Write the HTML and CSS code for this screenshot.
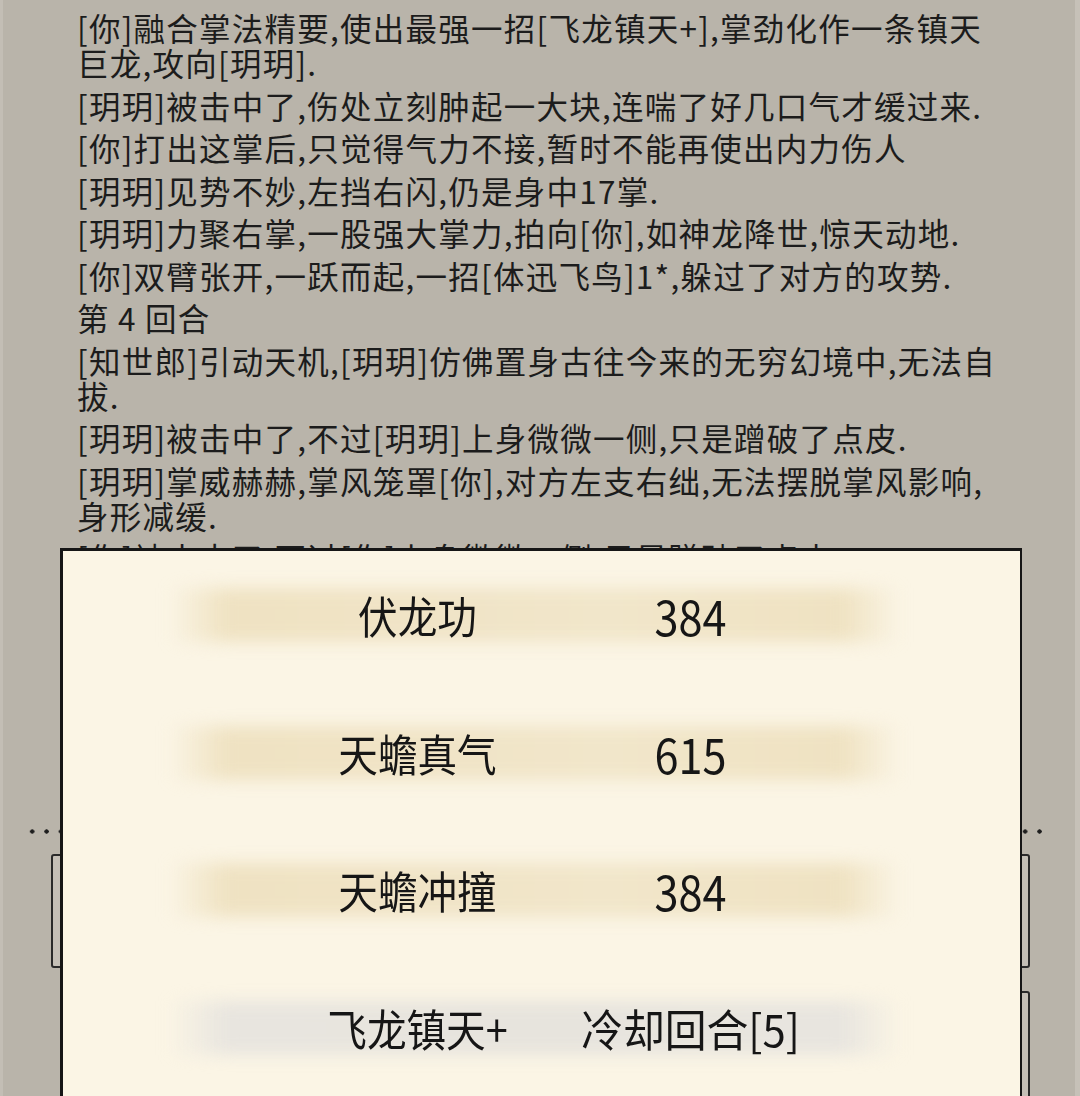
FILE: index.html
```html
<!DOCTYPE html>
<html lang="zh-CN">
<head>
<meta charset="utf-8">
<title>战斗</title>
<link rel="stylesheet" href="styles.css">
</head>
<body>
<div class="screen">
  <div class="log">
    <p>[你]融合掌法精要,使出最强一招[飞龙镇天+],掌劲化作一条镇天巨龙,攻向[玥玥].</p>
    <p>[玥玥]被击中了,伤处立刻肿起一大块,连喘了好几口气才缓过来.</p>
    <p>[你]打出这掌后,只觉得气力不接,暂时不能再使出内力伤人</p>
    <p>[玥玥]见势不妙,左挡右闪,仍是身中17掌.</p>
    <p>[玥玥]力聚右掌,一股强大掌力,拍向[你],如神龙降世,惊天动地.</p>
    <p>[你]双臂张开,一跃而起,一招[体迅飞鸟]1*,躲过了对方的攻势.</p>
    <p>第 4 回合</p>
    <p>[知世郎]引动天机,[玥玥]仿佛置身古往今来的无穷幻境中,无法自拔.</p>
    <p>[玥玥]被击中了,不过[玥玥]上身微微一侧,只是蹭破了点皮.</p>
    <p>[玥玥]掌威赫赫,掌风笼罩[你],对方左支右绌,无法摆脱掌风影响,身形减缓.</p>
    <p>[你]被击中了,不过[你]上身微微一侧,只是蹭破了点皮.</p>
  </div>
  <div class="divider"></div>
  <div class="actions">
    <div class="btn btn-left"></div>
    <div class="btn btn-right"></div>
    <div class="slot"></div>
    <div class="btn btn-right"></div>
  </div>

  <div class="popup">
    <div class="skill">
      <span class="name">伏龙功</span>
      <span class="value num">384</span>
    </div>
    <div class="skill">
      <span class="name">天蟾真气</span>
      <span class="value num">615</span>
    </div>
    <div class="skill">
      <span class="name">天蟾冲撞</span>
      <span class="value num">384</span>
    </div>
    <div class="skill skill-cd">
      <span class="name">飞龙镇天+</span>
      <span class="value">冷却回合[5]</span>
    </div>
  </div>
</div>
</body>
</html>
```
FILE: styles.css
```css
html, body {
  margin: 0;
  padding: 0;
}
body {
  background: #b9b4aa;
  font-family: "Noto Sans CJK SC", "Noto Sans", sans-serif;
  color: #1c1c1c;
}
.screen {
  position: relative;
  width: 1080px;
  height: 1096px;
  overflow: hidden;
  box-sizing: border-box;
  border-left: 3px solid #c3beb5;
  border-right: 5px solid #c6c1b8;
}
.log {
  height: 818px;
  overflow: hidden;
  box-sizing: border-box;
  padding: 10px 75px 0 74px;
  font-size: 31.5px;
  line-height: 35px;
  letter-spacing: 1.25px;
}
.log p {
  margin: 0 0 7.5px 0;
}
.divider {
  height: 5px;
  margin: 11px 26px 0 22px;
  background-image: radial-gradient(circle, #1e1e1e 1.9px, transparent 2.4px);
  background-size: 14.4px 5px;
  background-repeat: repeat-x;
}
.actions {
  display: grid;
  grid-template-columns: 1fr 1fr;
  row-gap: 23px;
  padding: 20px 45px 0 48px;
}
.btn {
  height: 110px;
  border: 2px solid #2a2a2a;
  border-radius: 3px;
  background: #c4bfb6;
}
.slot {
  height: 110px;
}

.popup {
  position: absolute;
  left: 57px;
  top: 548px;
  width: 962px;
  height: 600px;
  box-sizing: border-box;
  background: #fbf5e5;
  border: 3px solid #161616;
  border-right-width: 2.5px;
  padding-top: 34px;
  display: flex;
  flex-direction: column;
  gap: 77.5px;
}
.skill {
  position: relative;
  margin-left: 105px;
  width: 733px;
  height: 60px;
  box-sizing: border-box;
  padding-left: 113px;
  display: grid;
  grid-template-columns: 273px 273px;
  align-items: center;
  font-size: 44px;
  line-height: 60px;
  color: #161616;
}
.skill::before {
  content: "";
  position: absolute;
  inset: 3px 0;
  background: linear-gradient(90deg, rgba(238,224,190,0) 0%, #efe2c2 8%, #f0e4c7 40%, #f1e6ca 60%, #efe2c2 92%, rgba(238,224,190,0) 100%);
  filter: blur(8px);
  z-index: 0;
}
.skill-cd::before {
  background: linear-gradient(90deg, rgba(232,229,222,0) 0%, #e8e5df 8%, #e7e4dd 50%, #e8e5df 92%, rgba(232,229,222,0) 100%);
}
.name, .value {
  position: relative;
  z-index: 1;
  text-align: center;
  white-space: nowrap;
  transform: scaleX(0.9);
}
.skill-cd .value {
  transform: scaleX(0.95);
}
.num {
  font-size: 48px;
}
```
